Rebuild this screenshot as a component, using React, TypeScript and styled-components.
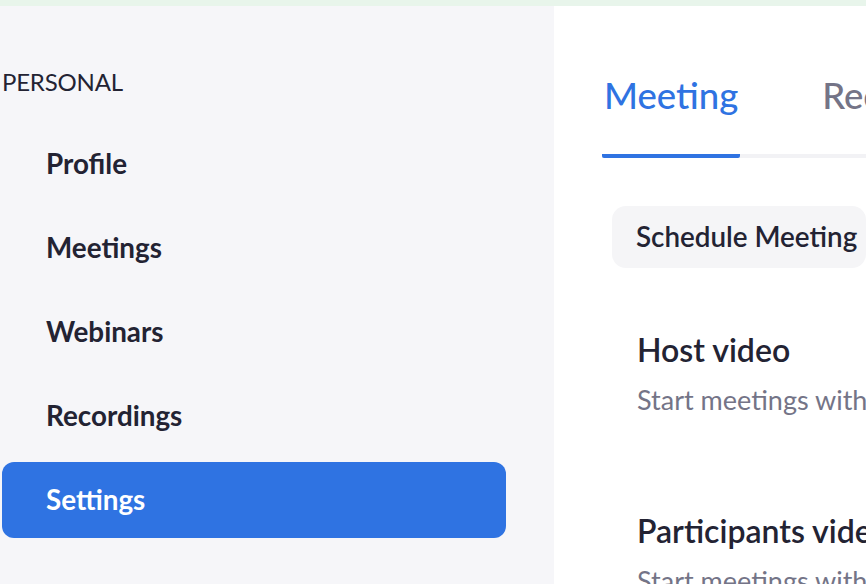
import React, { useState } from 'react';
import styled, { createGlobalStyle } from 'styled-components';

const colors = {
  blue: '#2f73e2',
  text: '#232333',
  muted: '#747487',
  sidebar: '#f6f6f9',
  pill: '#f5f5f7',
  line: '#f2f2f5',
  banner: '#e8f5eb',
};

const GlobalStyle = createGlobalStyle`
  html, body {
    margin: 0;
    padding: 0;
    background: #ffffff;
    font-family: Lato, "Open Sans", "Liberation Sans", sans-serif;
    color: ${colors.text};
    overflow: hidden;
  }
`;

const NAV_ITEMS = ['Profile', 'Meetings', 'Webinars', 'Recordings', 'Settings'];
const TABS = ['Meeting', 'Recording', 'Telephone'];

const SECTIONS = [
  { title: 'Host video', description: 'Start meetings with host video on' },
  { title: 'Participants video', description: 'Start meetings with participant video on' },
];

export default function App() {
  const [activeNav, setActiveNav] = useState('Settings');
  const [activeTab, setActiveTab] = useState('Meeting');

  return (
    <Page>
      <GlobalStyle />
      <Banner />
      <Layout>
        <Sidebar>
          <GroupLabel>PERSONAL</GroupLabel>
          <NavList>
            {NAV_ITEMS.map(item => (
              <li key={item}>
                <NavButton $active={item === activeNav} onClick={() => setActiveNav(item)}>
                  {item}
                </NavButton>
              </li>
            ))}
          </NavList>
        </Sidebar>
        <Main>
          <TabBar>
            {TABS.map(tab => (
              <Tab key={tab} $active={tab === activeTab} onClick={() => setActiveTab(tab)}>
                {tab}
              </Tab>
            ))}
          </TabBar>
          <Content>
            <SubNavPill>Schedule Meeting</SubNavPill>
            {SECTIONS.map(section => (
              <Section key={section.title}>
                <SectionTitle>{section.title}</SectionTitle>
                <SectionText>{section.description}</SectionText>
              </Section>
            ))}
          </Content>
        </Main>
      </Layout>
    </Page>
  );
}

const Page = styled.div`
  width: 866px;
  height: 584px;
  display: flex;
  flex-direction: column;
  overflow: hidden;
`;

const Banner = styled.div`
  height: 6px;
  flex-shrink: 0;
  background: ${colors.banner};
`;

const Layout = styled.div`
  flex: 1;
  display: flex;
  min-height: 0;
`;

const Sidebar = styled.nav`
  width: 554px;
  flex-shrink: 0;
  background: ${colors.sidebar};
  padding: 62px 48px 0 2px;
  box-sizing: border-box;
`;

const GroupLabel = styled.div`
  margin: 0 0 29px;
  font-size: 24px;
  line-height: 1.2;
  font-weight: 400;
  letter-spacing: -0.2px;
`;

const NavList = styled.ul`
  margin: 0;
  padding: 0;
  list-style: none;

  & > li + li {
    margin-top: 8px;
  }
`;

const NavButton = styled.button<{ $active: boolean }>`
  display: flex;
  align-items: center;
  width: 504px;
  height: 76px;
  padding: 0 0 0 44px;
  border: none;
  border-radius: 12px;
  background: ${p => (p.$active ? colors.blue : 'transparent')};
  color: ${p => (p.$active ? '#ffffff' : colors.text)};
  font-family: inherit;
  font-size: 27.8px;
  font-weight: 700;
  text-align: left;
  cursor: pointer;
`;

const Main = styled.main`
  flex: 1;
  min-width: 0;
  overflow: hidden;
  background: #ffffff;
`;

const TabBar = styled.div`
  display: flex;
  gap: 80px;
  margin: 68px 0 0 48px;
  border-bottom: 4px solid ${colors.line};
  white-space: nowrap;
`;

const Tab = styled.button<{ $active: boolean }>`
  padding: 0 2px 36px;
  margin-bottom: -4px;
  border: none;
  border-bottom: 4px solid ${p => (p.$active ? colors.blue : 'transparent')};
  border-radius: 2px;
  background: none;
  font-family: inherit;
  font-size: 36.5px;
  line-height: 1.2;
  font-weight: 500;
  color: ${p => (p.$active ? colors.blue : colors.muted)};
  cursor: pointer;
`;

const Content = styled.div`
  padding: 48px 0 0 58px;
`;

const SubNavPill = styled.div`
  display: flex;
  align-items: center;
  height: 62px;
  padding: 0 24px;
  border-radius: 14px;
  background: ${colors.pill};
  font-size: 27.8px;
  font-weight: 600;
  white-space: nowrap;
`;

const Section = styled.section`
  padding: 63px 0 0 25px;
  white-space: nowrap;

  & + & {
    padding-top: 95px;
  }
`;

const SectionTitle = styled.h3`
  margin: 0;
  font-size: 32px;
  line-height: 1.2;
  font-weight: 600;
`;

const SectionText = styled.p`
  margin: 15px 0 0;
  font-size: 27px;
  line-height: 1.2;
  color: ${colors.muted};
`;
